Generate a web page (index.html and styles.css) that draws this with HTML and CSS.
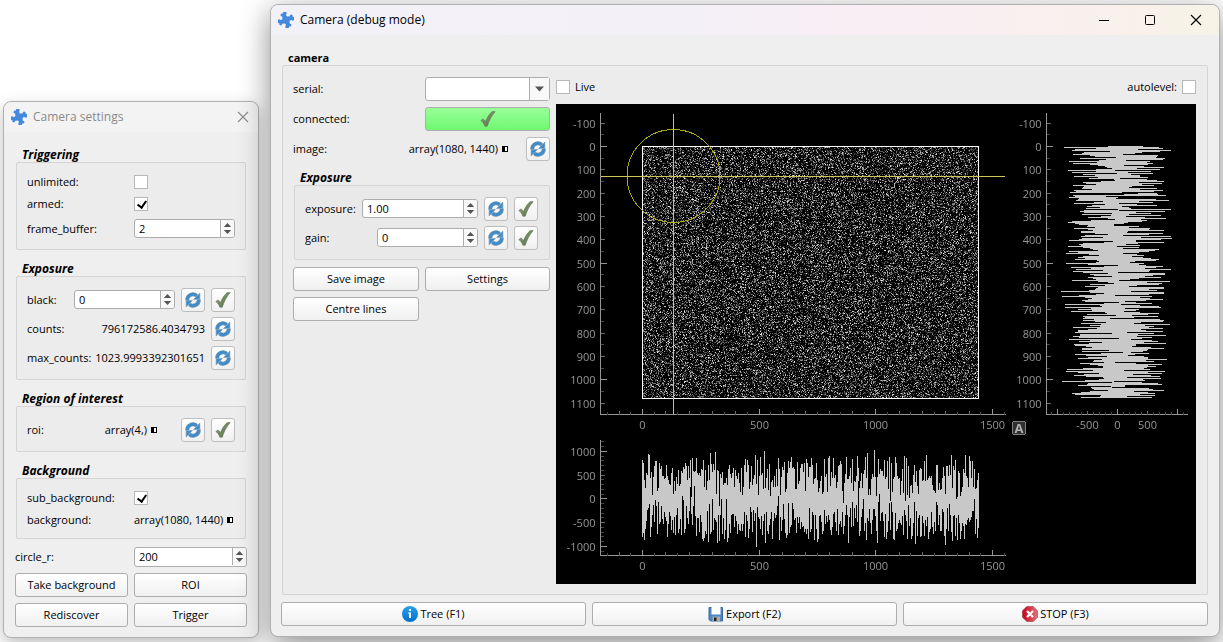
FILE: index.html
```html
<!DOCTYPE html>
<html lang="en">
<head>
<meta charset="utf-8">
<title>Camera (debug mode)</title>
<link rel="stylesheet" href="styles.css">
</head>
<body>
<svg class="defs" aria-hidden="true">
  <defs>
    <linearGradient id="tick" x1="0" y1="0" x2="1" y2="1"><stop offset="0" stop-color="#93a08a"/><stop offset="1" stop-color="#4e7438"/></linearGradient>
    <linearGradient id="info" x1="0" y1="0" x2="0" y2="1"><stop offset="0" stop-color="#2aa0ea"/><stop offset="1" stop-color="#0070cc"/></linearGradient>
    <linearGradient id="red" x1="0" y1="0" x2="1" y2="0"><stop offset="0" stop-color="#c4001c"/><stop offset="1" stop-color="#e2747c"/></linearGradient>
  </defs>
  <symbol id="i-puzzle" viewBox="0 0 16 16"><g transform="rotate(20 8 8)"><rect x="3.4" y="3.4" width="9.2" height="9.2" fill="#4389dc"/><g fill="#4389dc"><circle cx="4.6" cy="2.4" r="2"/><circle cx="13.6" cy="4.6" r="2"/><circle cx="11.4" cy="13.6" r="2"/><circle cx="2.4" cy="11.4" r="2"/><circle cx="11.6" cy="2.6" r="1.5"/><circle cx="13.4" cy="11.4" r="1.5"/><circle cx="4.4" cy="13.4" r="1.5"/><circle cx="2.6" cy="4.8" r="1.5"/></g><g fill="#f3f2f6"><circle cx="8" cy="2.600" r="1.6"/><circle cx="13.4" cy="8" r="1.6"/><circle cx="8" cy="13.4" r="1.6"/><circle cx="2.6" cy="8" r="1.6"/></g></g></symbol>
  <symbol id="i-refresh" viewBox="0 0 16 16"><g fill="none" stroke="#7f9aae" stroke-width="4"><path d="M2.200 8.300A5.700 5.700 0 0 1 11.500 3.600"/><path d="M13.800 7.700A5.700 5.700 0 0 1 4.500 12.400"/></g><g fill="none" stroke="#3f8ccb" stroke-width="2.800"><path d="M2.300 8A5.700 5.700 0 0 1 11.800 3.700"/><path d="M13.700 8A5.700 5.700 0 0 1 4.200 12.300"/></g><g fill="#3f8ccb" stroke="#7f9aae" stroke-width=".6"><path d="M14.900 1v6.600H8.500z"/><path d="M1.100 15V8.400h6.400z"/></g></symbol>
  <symbol id="i-check" viewBox="0 0 16 16"><path d="M.8 9.600l2.100-1.700c1.300.6 1.900 1.600 2.500 2.900C7.100 6.500 9.400 2.800 12.200.6h3C11.600 4.700 9 9.500 7.300 15.200H4.800C4 12.900 2.800 10.900.8 9.600z" fill="url(#tick)" stroke="#66735e" stroke-width=".6"/></symbol>
  <symbol id="i-stepper" viewBox="0 0 14 18"><path d="M3 7.500L7 3l4 4.500zM3 10.500L7 15l4-4.500z" fill="#555"/></symbol>
  <symbol id="i-close" viewBox="0 0 12 12"><path d="M1 1l10 10M11 1L1 11" fill="none" stroke="currentColor" stroke-width="1.100"/></symbol>
</svg>

<section class="window settings">
  <header class="titlebar">
    <svg class="icon"><use href="#i-puzzle"/></svg>
    <h1>Camera settings</h1>
    <button class="caption" aria-label="Close settings"><svg class="glyph"><use href="#i-close"/></svg></button>
  </header>
  <div class="settings-body">
    <fieldset class="group">
      <legend>Triggering</legend>
      <div class="frame">
        <div class="row short"><label for="unlimited">unlimited:</label><input id="unlimited" class="tick col2" type="checkbox"></div>
        <div class="row short"><label for="armed">armed:</label><input id="armed" class="tick col2" type="checkbox" checked></div>
        <div class="row spinrow"><label for="fb">frame_buffer:</label><span class="spin col2"><input id="fb" type="number" value="2"><svg><use href="#i-stepper"/></svg></span></div>
      </div>
    </fieldset>
    <fieldset class="group">
      <legend>Exposure</legend>
      <div class="frame">
        <div class="row"><label for="black">black:</label><span class="spin push"><input id="black" type="number" value="0"><svg><use href="#i-stepper"/></svg></span><button class="tool" aria-label="Refresh black"><svg class="icon"><use href="#i-refresh"/></svg></button><button class="tool" aria-label="Apply black"><svg class="icon"><use href="#i-check"/></svg></button></div>
        <div class="row"><span>counts:</span><output class="push">796172586.4034793</output><button class="tool" aria-label="Refresh counts"><svg class="icon"><use href="#i-refresh"/></svg></button></div>
        <div class="row"><span>max_counts:</span><output class="push">1023.9993392301651</output><button class="tool" aria-label="Refresh max counts"><svg class="icon"><use href="#i-refresh"/></svg></button></div>
      </div>
    </fieldset>
    <fieldset class="group">
      <legend>Region of interest</legend>
      <div class="frame">
        <div class="row"><span>roi:</span><output class="array roi">array(4,)</output><button class="tool push" aria-label="Refresh roi"><svg class="icon"><use href="#i-refresh"/></svg></button><button class="tool" aria-label="Apply roi"><svg class="icon"><use href="#i-check"/></svg></button></div>
      </div>
    </fieldset>
    <fieldset class="group">
      <legend>Background</legend>
      <div class="frame">
        <div class="row short"><label for="sub">sub_background:</label><input id="sub" class="tick col2" type="checkbox" checked></div>
        <div class="row short"><span>background:</span><output class="array col2">array(1080, 1440)</output></div>
      </div>
    </fieldset>
    <div class="actions">
      <label for="circle">circle_r:</label>
      <span class="spin wide"><input id="circle" type="number" value="200"><svg><use href="#i-stepper"/></svg></span>
      <button class="push-button">Take background</button>
      <button class="push-button">ROI</button>
      <button class="push-button">Rediscover</button>
      <button class="push-button">Trigger</button>
    </div>
  </div>
</section>

<main class="window camera">
  <header class="titlebar tinted">
    <svg class="icon"><use href="#i-puzzle"/></svg>
    <h1>Camera (debug mode)</h1>
    <button class="caption" aria-label="Minimise"><svg class="glyph" viewBox="0 0 12 12"><path d="M1 6.500h10" stroke="currentColor"/></svg></button>
    <button class="caption" aria-label="Maximise"><svg class="glyph" viewBox="0 0 12 12"><rect x="1.500" y="1.500" width="9" height="9" rx="1" fill="none" stroke="currentColor"/></svg></button>
    <button class="caption" aria-label="Close"><svg class="glyph"><use href="#i-close"/></svg></button>
  </header>
  <div class="camera-body">
    <fieldset class="group upright">
      <legend>camera</legend>
      <div class="frame panes">
        <div class="controls">
          <div class="form">
            <label for="serial">serial:</label>
            <span class="combo"><select id="serial"><option></option></select><svg viewBox="0 0 9 5"><path d="M0 0h9L4.500 5z" fill="#555"/></svg></span>
            <span>connected:</span>
            <button class="push-button on" aria-label="Connected"><svg class="icon"><use href="#i-check"/></svg></button>
          </div>
          <div class="image-row"><span>image:</span><output class="array push">array(1080, 1440)</output><button class="tool" aria-label="Refresh image"><svg class="icon"><use href="#i-refresh"/></svg></button></div>
          <fieldset class="group inner">
            <legend>Exposure</legend>
            <div class="frame">
              <div class="row"><label for="exposure">exposure:</label><span class="spin push long"><input id="exposure" type="number" step="0.01" value="1.00"><svg><use href="#i-stepper"/></svg></span><button class="tool" aria-label="Refresh exposure"><svg class="icon"><use href="#i-refresh"/></svg></button><button class="tool" aria-label="Apply exposure"><svg class="icon"><use href="#i-check"/></svg></button></div>
              <div class="row"><label for="gain">gain:</label><span class="spin push"><input id="gain" type="number" value="0"><svg><use href="#i-stepper"/></svg></span><button class="tool" aria-label="Refresh gain"><svg class="icon"><use href="#i-refresh"/></svg></button><button class="tool" aria-label="Apply gain"><svg class="icon"><use href="#i-check"/></svg></button></div>
            </div>
          </fieldset>
          <div class="form buttons">
            <button class="push-button">Save image</button>
            <button class="push-button">Settings</button>
            <button class="push-button">Centre lines</button>
          </div>
        </div>
        <div class="view">
          <div class="view-bar">
            <label><input class="tick" type="checkbox">Live</label>
            <label class="push">autolevel:<input class="tick" type="checkbox"></label>
          </div>
          <svg class="plot" id="plot" viewBox="0 0 640 480" role="img" aria-label="Camera image with line profiles">
            <foreignObject x="86" y="42" width="337" height="253"><canvas id="noise" class="noise" width="337" height="253"></canvas></foreignObject>
            <rect class="edge" x="86.500" y="42.500" width="336" height="252"/>
            <path class="trace" id="trace-x"/>
            <path class="trace" id="trace-y"/>
            <circle class="ring" cx="117.500" cy="72" r="46.500"/>
            <path class="cross" d="M45 72.500h404M117.500 10v300"/>
            <g id="axes"></g>
            <rect class="auto-box" x="456.500" y="317.500" width="13" height="13" rx="2"/>
            <text class="auto" x="463" y="329">A</text>
          </svg>
        </div>
      </div>
    </fieldset>
    <footer class="bar">
      <button class="push-button"><svg class="icon" viewBox="0 0 16 16"><circle cx="8" cy="8" r="8" fill="url(#info)"/><path d="M7 3h2v2H7zM6 6.500h3V12H7V7.500H6z" fill="#fff"/></svg>Tree (F1)</button>
      <button class="push-button"><svg class="icon" viewBox="0 0 16 16"><path d="M1 1.500h13.500V15H2.500L1 13.500z" fill="#4f86c6" stroke="#3c68a0"/><path d="M3.500 1h9v7.500h-9z" fill="#fff"/><path d="M4.500 10.500h7.500V15H4.500z" fill="#a9adb0"/><path d="M6 11.500h2.500V15H6z" fill="#222"/></svg>Export (F2)</button>
      <button class="push-button"><svg class="icon" viewBox="0 0 16 16"><path d="M4.800.5h6.400l4.300 4.300v6.400l-4.300 4.300H4.800L.5 11.200V4.800z" fill="url(#red)" stroke="#a8404a" stroke-width=".7"/><path d="M5 5l6 6M11 5l-6 6" stroke="#fff" stroke-width="2.200"/></svg>STOP (F3)</button>
    </footer>
  </div>
</main>
<script src="plot.js"></script>
</body>
</html>
```
FILE: styles.css
```css
* { box-sizing: border-box; }
body {
  margin: 0;
  min-height: 100vh;
  padding: 4px 3px;
  display: flex;
  align-items: flex-end;
  gap: 11px;
  background: #fff;
  overflow: hidden;
  font: 11px/14px "Open Sans", "Noto Sans", sans-serif;
  color: #000;
}
button, input, select { font: inherit; color: inherit; margin: 0; }
.defs { position: absolute; width: 0; height: 0; }
.icon { width: 16px; height: 16px; flex: none; }

.window {
  border: 1px solid #b0b0b0;
  border-radius: 8px;
  background: #efefef;
}
.settings { flex: none; width: 256px; box-shadow: 0 6px 16px rgba(0, 0, 0, .25); }
.camera { flex: 1; min-width: 0; margin-bottom: 1px; box-shadow: 0 8px 30px rgba(0, 0, 0, .45); }

.titlebar {
  display: flex;
  align-items: center;
  height: 30px;
  padding-left: 7px;
  border-radius: 8px 8px 0 0;
  background: #f3f3f3;
  color: #8a8a8a;
}
.titlebar h1 { margin: 0 auto 0 6px; font-size: 12px; font-weight: 400; }
.tinted { background: linear-gradient(90deg, #f3f1f8, #f4f0f7 45%, #f9eef4 65%, #f9f0ee 85%, #f6f3e6); color: #000; }
.caption { display: grid; place-items: center; width: 30px; height: 28px; padding: 0; border: 0; background: none; color: inherit; }
.tinted .caption { width: 46px; }
.glyph { width: 12px; height: 12px; }

.settings-body { padding: 4px 11px 10px; }
.camera-body { padding: 4px 10px 10px; }

.group { border: 0; margin: 0 1px; padding: 0; min-width: 0; }
.group legend { padding: 12px 0 0 6px; font-size: 12px; font-weight: 700; font-style: italic; }
.upright > legend { font-size: 11px; font-style: normal; }
.frame { border: 1px solid #d4d4d4; border-radius: 2px; background: #ececec; padding: 8px 10px 7px; }
.row { display: flex; align-items: center; gap: 6px; height: 29px; }
.short { height: 22px; }
.spinrow { height: 27px; }
.row > :first-child { flex: 1; min-width: 0; white-space: nowrap; }
.row > .push { flex: none; }
.col2 { margin-right: auto; }
.row > :first-child:has(+ .col2) { flex: 0 0 101px; }
.roi { margin-right: 14px; }

.tick {
  appearance: none;
  width: 14px;
  height: 14px;
  border: 1px solid #b8b8b8;
  background: #fff;
}
.tick:checked::before {
  content: "";
  display: block;
  width: 4px;
  height: 7px;
  margin: 1px 0 0 4px;
  border: solid #000;
  border-width: 0 2px 2px 0;
  transform: rotate(35deg);
}

.spin {
  display: flex;
  width: 101px;
  height: 19px;
  border: 1px solid #adadad;
  border-radius: 3px;
  background: #fff;
  overflow: hidden;
}
.spin input {
  flex: 1;
  min-width: 0;
  padding: 0 4px;
  border: 0;
  outline: 0;
  background: none;
  appearance: textfield;
}
.spin input::-webkit-inner-spin-button { appearance: none; }
.spin svg { width: 14px; height: 17px; border-left: 1px solid #adadad; background: #f8f8f8; }
.long { width: 116px; }
.wide { width: auto; height: 20px; }
.push { margin-left: auto; }

.tool, .push-button {
  display: flex;
  align-items: center;
  justify-content: center;
  gap: 2px;
  height: 24px;
  padding: 0;
  border: 1px solid #adadad;
  border-radius: 3px;
  background: linear-gradient(#fff, #f0f0f0);
}
.tool { width: 24px; flex: none; border-color: #bdbdbd; }
.on { background: linear-gradient(#98ff98, #70f870); }

.array { white-space: nowrap; }
.array::after {
  content: "";
  display: inline-block;
  width: 6px;
  height: 6px;
  margin: 0 4px 1px;
  border: solid #000;
  border-width: 1px 1px 1px 3px;
  box-sizing: border-box;
  background: #fff;
}

.actions { display: grid; grid-template-columns: 1fr 1fr; gap: 6px; align-items: center; padding-top: 8px; }

.panes { display: flex; gap: 6px; padding: 11px 11px 10px 10px; }
.controls { flex: none; width: 257px; }
.form { display: grid; grid-template-columns: 126px 125px; gap: 6px; align-items: center; }
.buttons { padding-top: 7px; }
.combo { display: flex; height: 24px; border: 1px solid #adadad; border-radius: 3px; background: #fff; }
.combo select { flex: 1; border: 0; background: none; appearance: none; outline: 0; }
.combo svg { width: 20px; padding: 0 5px; border-left: 1px solid #adadad; background: #f8f8f8; }
.image-row { display: flex; align-items: center; gap: 14px; height: 24px; margin-top: 6px; }
.inner { margin: 0 0 0 1px; }
.inner legend { padding-top: 10px; }
.inner .frame { background: #e9e9e9; padding-right: 11px; }

.view { flex: 1; min-width: 0; }
.view-bar { display: flex; height: 27px; padding-top: 2px; }
.view-bar label { display: flex; gap: 5px; height: 16px; align-items: center; }
.plot { display: block; width: 100%; background: #000; shape-rendering: crispEdges; }
.noise { display: block; image-rendering: pixelated; }
.edge { fill: none; stroke: #fff; }
.trace { fill: none; stroke: #c8c8c8; }
.ring { fill: none; stroke: #a8a810; }
.cross { fill: none; stroke: #ccc858; }
.axis { fill: none; stroke: #969696; }
.mid { stroke: #6a6a6a; }
.minor { stroke: #484848; }
.num { fill: #969696; font-size: 11px; text-anchor: middle; }
.end { text-anchor: end; }
.auto-box { fill: #303030; stroke: #808080; }
.auto { fill: #b0b0b0; font-size: 13px; font-weight: 700; text-anchor: middle; }

.bar { display: grid; grid-template-columns: repeat(3, 1fr); gap: 6px; padding: 7px 1px 0 0; }
```
FILE: plot.js
```javascript
var seed = 20231;
function rnd() {
  seed = (seed * 1664525 + 1013904223) % 4294967296;
  return seed / 4294967296;
}

// Camera frame: background-subtracted noise, negative counts clip to black.
var canvas = document.getElementById('noise');
var ctx = canvas.getContext('2d');
var img = ctx.createImageData(canvas.width, canvas.height);
for (var i = 0; i < img.data.length; i += 4) {
  var v = Math.max(0, rnd() - rnd()) * 255;
  img.data[i] = img.data[i + 1] = img.data[i + 2] = v;
  img.data[i + 3] = 255;
}
ctx.putImageData(img, 0, 0);

// Line profile: five samples per pixel column, drawn as its min-max span.
function trace(id, start, count, centre, scale, vertical) {
  var d = '';
  for (var p = 0; p < count; p++) {
    var lo = 1, hi = -1;
    for (var s = 0; s < 5; s++) {
      var v = rnd() - rnd();
      lo = Math.min(lo, v);
      hi = Math.max(hi, v);
    }
    var a = Math.round(centre + lo * scale), b = Math.round(centre + hi * scale), q = start + p + 0.5;
    d += vertical ? 'M' + a + ' ' + q + 'H' + b : 'M' + q + ' ' + a + 'V' + b;
  }
  document.getElementById(id).setAttribute('d', d);
}
trace('trace-x', 86, 337, 394.5, 49, false);
trace('trace-y', 42, 252, 561.5, 58, true);

var axes = '';
function line(cls, d) { axes += '<path class="axis ' + cls + '" d="' + d + '"/>'; }
function text(cls, x, y, s) { axes += '<text class="num ' + cls + '" x="' + x + '" y="' + y + '">' + s + '</text>'; }

// o: origin pixel, k: pixels per unit, major/mid/step: tick spacing in units
function axis(a) {
  for (var v = a.from; v <= a.to; v += a.step) {
    var p = Math.floor(a.o + v * a.k) + 0.5;
    var major = v % a.major === 0, mid = v % a.mid === 0;
    var len = major ? 6 : mid ? 4 : 3;
    var cls = major ? '' : mid ? 'mid' : 'minor';
    line(cls, a.left ? 'M' + a.at + ' ' + p + 'h' + len : 'M' + p + ' ' + a.at + 'v' + -len);
    if (v % a.label === 0 && v >= a.lmin && v <= a.lmax) {
      if (a.left) text('end', a.at - 5, p + 4, v);
      else text('', p, a.at + 14, v);
    }
  }
}
line('', 'M44.5 9V310.5H450');
line('', 'M490.5 9V310.5H632');
line('', 'M44.5 336V451.5H450');
[44.5, 490.5].forEach(function (x) {
  axis({ left: true, at: x, o: 42.4, k: 0.2333, from: -100, to: 1100, step: 50, mid: 100, major: 500, label: 100, lmin: -100, lmax: 1100 });
});
axis({ left: true, at: 44.5, o: 394.8, k: -0.0475, from: -1100, to: 1200, step: 100, mid: 500, major: 1000, label: 500, lmin: -1000, lmax: 1000 });
[310.5, 451.5].forEach(function (y) {
  axis({ at: y, o: 86.4, k: 0.2333, from: -150, to: 1550, step: 50, mid: 100, major: 500, label: 500, lmin: 0, lmax: 1500 });
});
axis({ at: 310.5, o: 561.4, k: 0.06, from: -1100, to: 1100, step: 100, mid: 500, major: 1000, label: 500, lmin: -500, lmax: 500 });
document.getElementById('axes').innerHTML = axes;
```
